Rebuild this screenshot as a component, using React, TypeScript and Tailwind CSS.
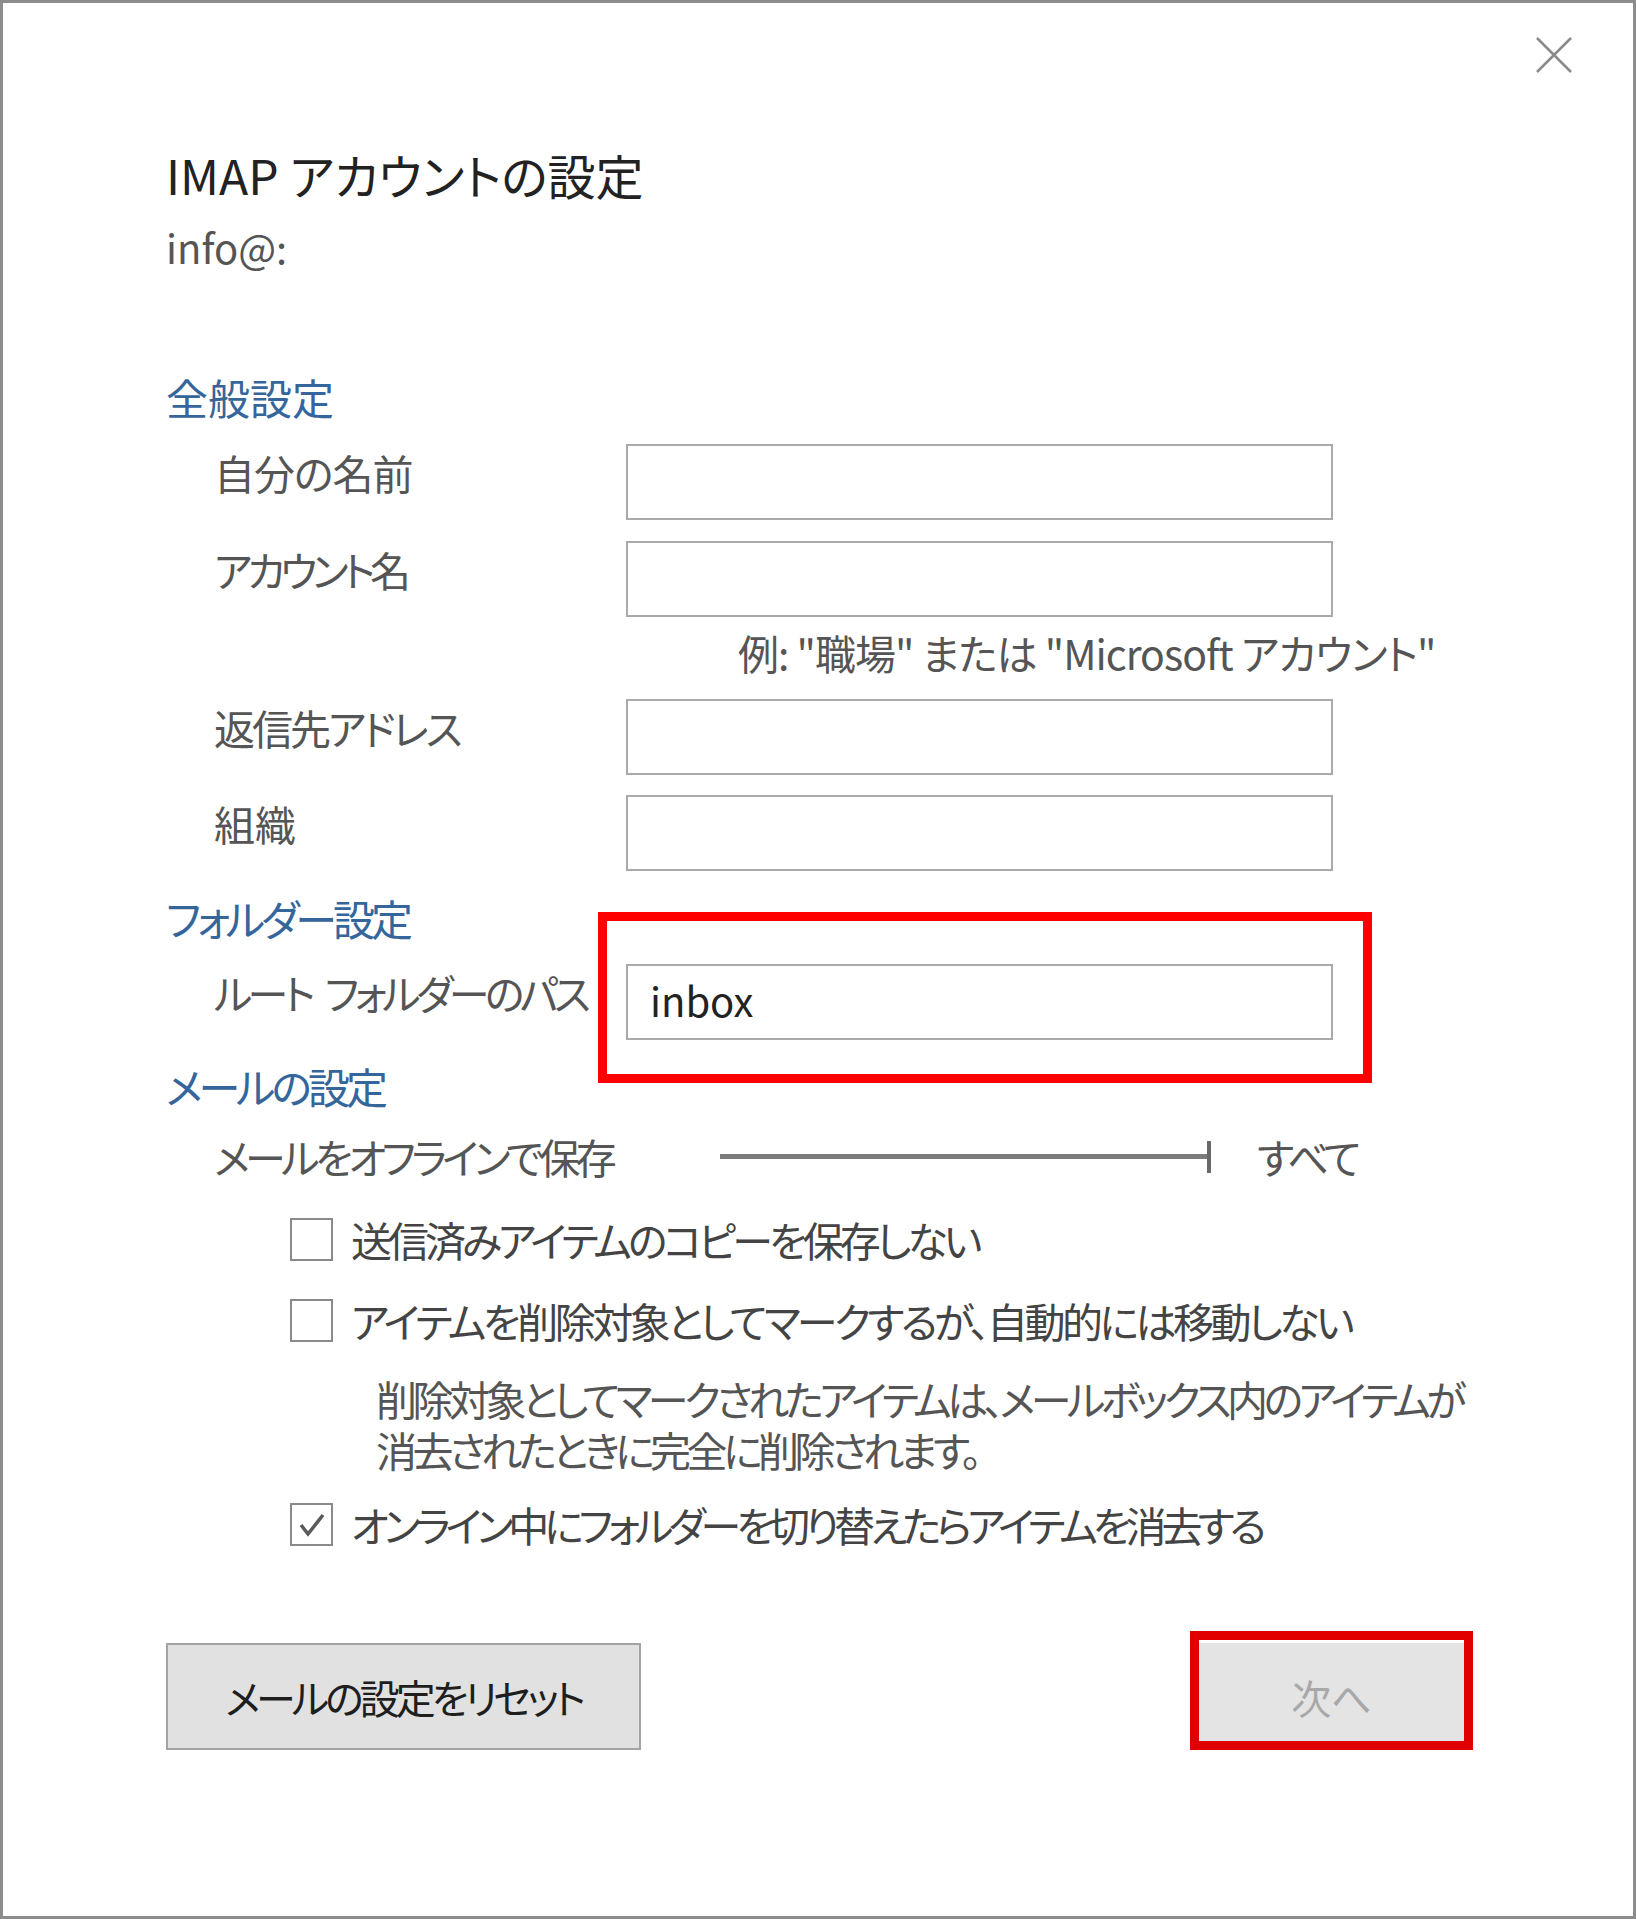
const font = "font-['Noto_Sans_CJK_JP','Noto_Sans',sans-serif] [font-feature-settings:'palt']";

function Field({ label, track, value }: { label: string; track: string; value?: string }) {
  return (
    <div className="flex items-start">
      <div className={`w-[460px] shrink-0 pl-[48px] pt-[8px] text-[41px] leading-none text-[#555] ${track}`}>
        {label}
      </div>
      <div className="h-[76px] w-[707px] border-2 border-[#aaaaaa] bg-white px-[22px] pt-[14px] text-[40px] leading-none text-[#222]">
        {value}
      </div>
    </div>
  );
}

function Heading({ children, mt, track }: { children: string; mt: string; track: string }) {
  return (
    <div className={`${mt} ${track} text-[42px] leading-none text-[#35669b]`}>{children}</div>
  );
}

function Check({ checked, label, track }: { checked?: boolean; label: string; track: string }) {
  return (
    <div className="flex items-center pl-[124px]">
      <div className="flex h-[43px] w-[43px] shrink-0 items-center justify-center border-2 border-[#8a8a8a] bg-white">
        {checked && (
          <svg width="34" height="34" viewBox="0 0 34 34">
            <polyline
              points="6,17 13,26 28,7"
              fill="none"
              stroke="#5a5a5a"
              strokeWidth="3.5"
            />
          </svg>
        )}
      </div>
      <span className={`ml-[18px] text-[41px] leading-none text-[#444] ${track}`}>{label}</span>
    </div>
  );
}

export default function App() {
  return (
    <div className={`${font} h-[1919px] w-[1636px] border-[3px] border-[#8c8c8c] bg-white`}>
      {/* close */}
      <div className="flex justify-end pr-[61px] pt-[34px]">
        <svg width="36" height="36" viewBox="0 0 36 36">
          <path d="M1 1L35 35M35 1L1 35" stroke="#8a8a8a" strokeWidth="2.5" />
        </svg>
      </div>

      <div className="pl-[163px]">
        <div className="mt-[77px] text-[48px] leading-none text-[#222]">IMAP アカウントの設定</div>
        <div className="mt-[29px] text-[40px] leading-none text-[#555]">info@:</div>

        <Heading mt="mt-[109px]" track="tracking-normal">全般設定</Heading>
        <div className="mt-[26px] flex flex-col gap-[21px]">
          <Field track="tracking-[-1px]" label="自分の名前" />
          <Field track="tracking-[-5px]" label="アカウント名" />
        </div>
        <div className="mt-[15px] pl-[572px] text-[41px] leading-none tracking-[-1px] text-[#555]">
          例: "職場" または "Microsoft アカウント"
        </div>
        <div className="mt-[26px] flex flex-col gap-[20px]">
          <Field track="tracking-[-3px]" label="返信先アドレス" />
          <Field track="tracking-normal" label="組織" />
        </div>

        <Heading mt="mt-[26px]" track="tracking-[-4px]">フォルダー設定</Heading>
        <div className="mt-[25px] flex items-start">
          <div className="flex w-[460px] shrink-0 gap-[14px] pl-[48px] pt-[8px] text-[41px] leading-none tracking-[-4.5px] text-[#555]">
            <span>ルート</span>
            <span>フォルダーのパス</span>
          </div>
          <div className="relative">
            <div className="h-[76px] w-[707px] border-2 border-[#aaaaaa] bg-white px-[22px] pt-[14px] text-[40px] leading-none text-[#222]">
              inbox
            </div>
            <div className="absolute -bottom-[43px] -left-[28px] -right-[39px] -top-[52px] border-[9px] border-[#ff0000]" />
          </div>
        </div>

        <Heading mt="mt-[25px]" track="tracking-[-4px]">メールの設定</Heading>
        <div className="mt-[29px] flex items-center">
          <div className="w-[554px] shrink-0 pl-[48px] text-[41px] leading-none tracking-[-4.5px] text-[#555]">
            メールをオフラインで保存
          </div>
          <div className="flex w-[491px] items-center">
            <div className="h-[5px] flex-1 bg-[#7c7c7c]" />
            <div className="h-[32px] w-[4px] bg-[#6a6a6a]" />
          </div>
          <div className="ml-[46px] text-[41px] leading-none tracking-[-4px] text-[#555]">すべて</div>
        </div>

        <div className="mt-[41px]">
          <Check track="tracking-[-4px]" label="送信済みアイテムのコピーを保存しない" />
        </div>
        <div className="mt-[38px]">
          <Check track="tracking-[-3.5px]" label="アイテムを削除対象としてマークするが、自動的には移動しない" />
        </div>
        <div className="mt-[31px] pl-[210px] text-[41px] leading-[51px] tracking-[-4.5px] text-[#555]">
          削除対象としてマークされたアイテムは、メールボックス内のアイテムが
          <br />
          消去されたときに完全に削除されます。
        </div>
        <div className="mt-[28px]">
          <Check checked track="tracking-[-5px]" label="オンライン中にフォルダーを切り替えたらアイテムを消去する" />
        </div>

        <div className="mt-[97px] flex items-start justify-between pr-[160px]">
          <button className="flex h-[107px] w-[475px] items-center justify-center border-2 border-[#a3a3a3] bg-[#e1e1e1] text-[40px] leading-none tracking-[-4px] text-[#1e1e1e]">
            メールの設定をリセット
          </button>
          <div className="relative">
            <button className="flex h-[107px] w-[283px] items-center justify-center bg-[#e4e4e4] text-[40px] leading-none text-[#a8a8a8]">
              次へ
            </button>
            <div className="absolute -top-[12px] bottom-0 left-0 right-0 border-[9px] border-[#e00000]" />
          </div>
        </div>
      </div>
    </div>
  );
}
